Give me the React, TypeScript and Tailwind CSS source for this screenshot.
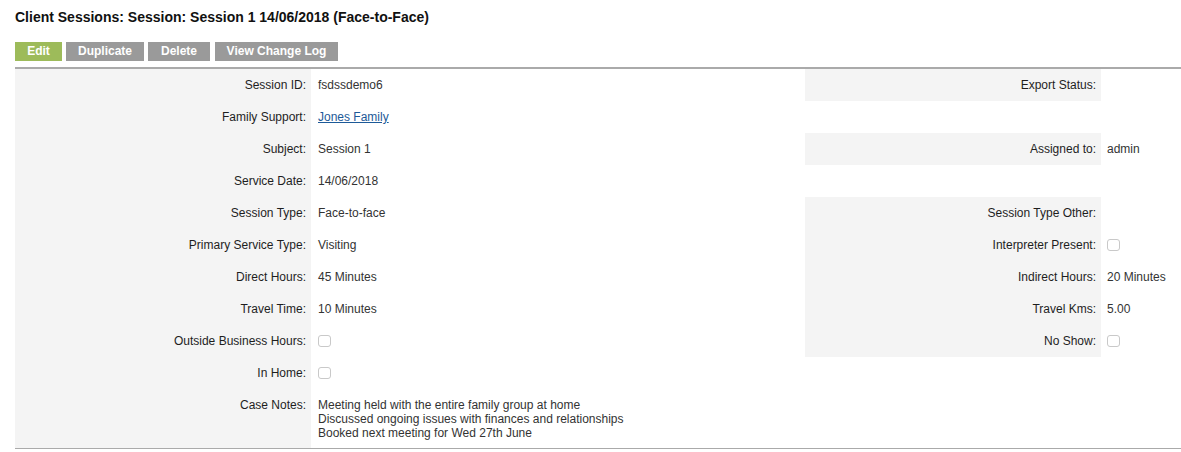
import React from "react";

type Val = string | React.ReactNode;

const Check = () => (
  <span className="inline-block w-[13px] h-[12px] border border-[#c9c9c9] rounded-[3px] bg-white align-middle" />
);

const rows: { label: string; value?: Val; rLabel?: string; rValue?: Val }[] = [
  { label: "Session ID:", value: "fsdssdemo6", rLabel: "Export Status:" },
  {
    label: "Family Support:",
    value: (
      <a href="#" className="text-[#1d5a98] underline">
        Jones Family
      </a>
    ),
  },
  { label: "Subject:", value: "Session 1", rLabel: "Assigned to:", rValue: "admin" },
  { label: "Service Date:", value: "14/06/2018" },
  { label: "Session Type:", value: "Face-to-face", rLabel: "Session Type Other:" },
  { label: "Primary Service Type:", value: "Visiting", rLabel: "Interpreter Present:", rValue: <Check /> },
  { label: "Direct Hours:", value: "45 Minutes", rLabel: "Indirect Hours:", rValue: "20 Minutes" },
  { label: "Travel Time:", value: "10 Minutes", rLabel: "Travel Kms:", rValue: "5.00" },
  { label: "Outside Business Hours:", value: <Check />, rLabel: "No Show:", rValue: <Check /> },
  { label: "In Home:", value: <Check /> },
];

export default function App() {
  return (
    <div className="min-h-screen bg-white pt-[9px] pl-[15px] text-[12px] font-['Liberation_Sans',Arial,sans-serif]">
      {/* TITLE */}
      <h1 className="text-[14px] leading-[16px] font-bold text-[#111]">
        Client Sessions: Session: Session 1 14/06/2018 (Face-to-Face)
      </h1>

      {/* BUTTONS */}
      <div className="flex gap-[4px] mt-[17px]">
        <button className="h-[19px] w-[47px] bg-[#9dbb5a] text-white font-bold leading-[19px]">Edit</button>
        <button className="h-[19px] w-[78px] bg-[#9a9a9a] text-white font-bold leading-[19px]">Duplicate</button>
        <button className="h-[19px] w-[62px] bg-[#9a9a9a] text-white font-bold leading-[19px]">Delete</button>
        <button className="h-[19px] w-[123px] ml-[1px] bg-[#9a9a9a] text-white font-bold leading-[19px]">View Change Log</button>
      </div>

      {/* DETAILS */}
      <div className="mt-[6px] border-t-2 border-[#aaaaaa] border-b border-b-[#aaaaaa] grid grid-cols-[296px_494px_296px_1fr]">
        {rows.map((r) => (
          <React.Fragment key={r.label}>
            <div className="h-[32px] bg-[#f4f4f4] flex items-center justify-end pr-[5px] text-[#1e1e1e]">
              {r.label}
            </div>
            <div className="h-[32px] flex items-center pl-[7px] text-[#333]">{r.value}</div>
            <div
              className={
                r.rLabel
                  ? "h-[32px] bg-[#f4f4f4] flex items-center justify-end pr-[5px] text-[#1e1e1e]"
                  : "h-[32px]"
              }
            >
              {r.rLabel}
            </div>
            <div className="h-[32px] flex items-center pl-[6px] text-[#333]">{r.rValue}</div>
          </React.Fragment>
        ))}

        {/* CASE NOTES */}
        <div className="bg-[#f4f4f4] pt-[9px] pb-[8px] pr-[5px] text-right leading-[14px] text-[#1e1e1e]">
          Case Notes:
        </div>
        <div className="col-span-3 pt-[9px] pb-[8px] pl-[7px] leading-[14px] text-[#333]">
          <div>Meeting held with the entire family group at home</div>
          <div>Discussed ongoing issues with finances and relationships</div>
          <div>Booked next meeting for Wed 27th June</div>
        </div>
      </div>
    </div>
  );
}
